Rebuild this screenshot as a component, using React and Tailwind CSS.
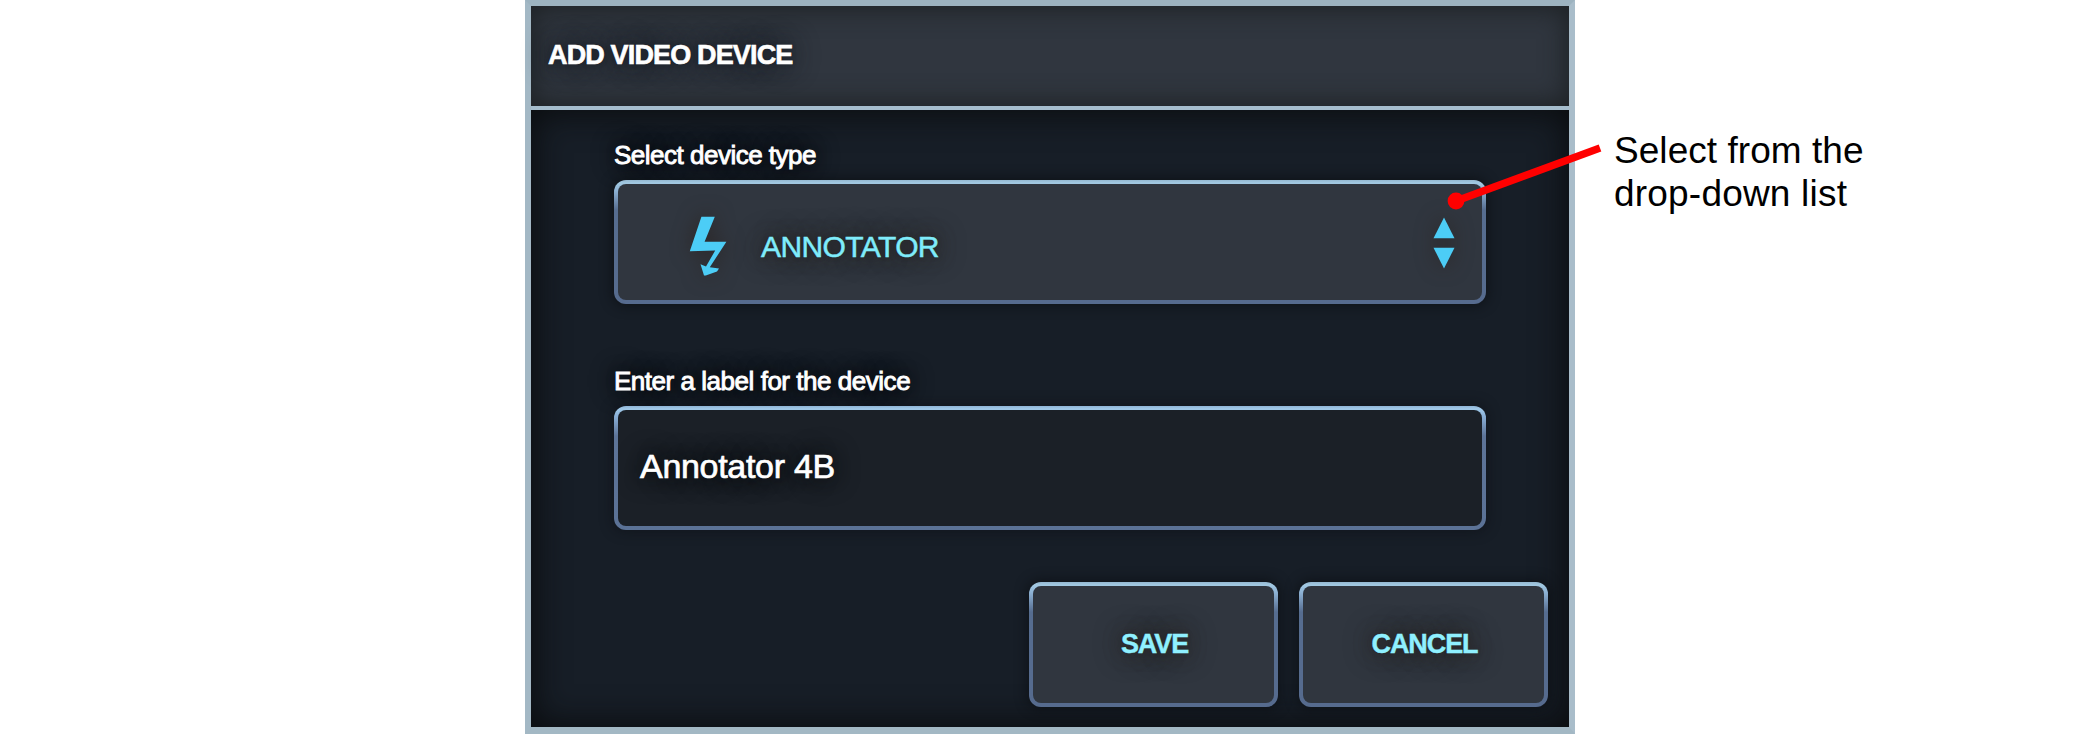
const FRAME =
  "rounded-[12px] border-[4px] border-transparent";
const RAISED =
  "[background:linear-gradient(#30363f,#30363f)_padding-box,linear-gradient(#94b8d0_0px,#a2c9e2_3px,#8fb4d6_10px,#566d90_30px,#566b8e_100%)_border-box] shadow-[0_0_12px_2px_rgba(12,14,19,0.7)]";
const SUNKEN =
  "[background:linear-gradient(#1b2027,#1b2027)_padding-box,linear-gradient(#8fb4d6_0px,#a0c9e8_3px,#8ab0d8_10px,#5d7498_30px,#5b7296_100%)_border-box] shadow-[0_0_12px_2px_rgba(12,14,19,0.5)]";

function BoltIcon() {
  return (
    <svg
      className="mt-[7px] h-[60px] w-[38px] shrink-0 drop-shadow-[0_0_10px_rgba(42,34,32,0.9)]"
      viewBox="0 0 38 60"
      fill="#4ccdf6"
    >
      <path d="M12.4 0.7H25.8L15.6 25.7H37.4L20.8 51.3L30 52.6L28 55.6L16.8 59.5H15L11.5 48.3L17 50.6L26.2 34.6L0.8 35.2Z" />
    </svg>
  );
}

function SortIcon() {
  return (
    <svg
      className="h-[52px] w-[22px] shrink-0 drop-shadow-[0_0_10px_rgba(42,34,32,0.9)]"
      viewBox="0 0 22 52"
      fill="#4ccdf6"
    >
      <path d="M11 0.5L21.5 21.3H0.5Z" />
      <path d="M0.5 30.7H21.5L11 51.5Z" />
    </svg>
  );
}

function ActionButton({ children }) {
  return (
    <button
      className={`${FRAME} ${RAISED} flex h-[125px] w-[249px] items-center justify-center pl-[2px] text-[27px] font-bold tracking-[-1.1px] text-[#8ff0ff] [-webkit-text-stroke:0.4px_#8ff0ff] [text-shadow:0_0_4px_#2c2a2b,0_0_18px_#2a2524,0_0_28px_#2a2524]`}
    >
      {children}
    </button>
  );
}

export default function App() {
  return (
    <div className="relative flex h-[734px] w-[2100px] overflow-hidden bg-white pl-[525px] font-['Liberation_Sans',Arial,sans-serif]">
      <section className="flex h-[734px] w-[1050px] shrink-0 flex-col border-[6px] border-b-[7px] border-t-[#9db3c0] border-r-[#a9bdca] border-b-[#a3b8c4] border-l-[#a3b8c5] bg-[#171e27]">
        <header className="flex h-[104px] shrink-0 items-center border-b-[4px] border-[#a5bdcd] bg-[#30363f] pb-[2px] pl-[17px] shadow-[inset_0_0_24px_4px_rgba(24,28,30,0.75)]">
          <h1 className="text-[27px] leading-none font-bold tracking-[-0.85px] text-white [-webkit-text-stroke:0.6px_white] [text-shadow:0_0_4px_#1d222a,0_0_20px_#1d222a,0_0_28px_#1d222a]">
            ADD VIDEO DEVICE
          </h1>
        </header>
        <div className="flex flex-1 flex-col shadow-[inset_0_0_32px_4px_rgba(8,9,10,0.85)]">
          <div className="flex flex-col pr-[83px] pl-[83px]">
            <label className="mt-[30px] h-[40px] text-[26px] leading-[30px] tracking-[-0.5px] text-white [-webkit-text-stroke:0.9px_white] [text-shadow:0_0_16px_#090b0e,0_0_24px_#090b0e]">
              Select device type
            </label>
            <div className={`${FRAME} ${RAISED} flex h-[124px] items-center pr-[27px] pl-[71px]`}>
              <BoltIcon />
              <span className="ml-[34px] pt-[9px] text-[30px] leading-none tracking-[-0.6px] text-[#7fecfb] [-webkit-text-stroke:0.5px_#7fecfb] [text-shadow:0_0_4px_#2a2524,0_0_18px_#2a2524,0_0_28px_#2a2524]">
                ANNOTATOR
              </span>
              <span className="mt-[2px] ml-auto">
                <SortIcon />
              </span>
            </div>
            <label className="mt-[62px] h-[40px] text-[26px] leading-[30px] tracking-[-0.47px] text-white [-webkit-text-stroke:0.9px_white] [text-shadow:0_0_16px_#090b0e,0_0_24px_#090b0e]">
              Enter a label for the device
            </label>
            <div className={`${FRAME} ${SUNKEN} flex h-[124px] items-center pb-[4px] pl-[22px] text-[34px] tracking-[-0.3px] text-white`}>
              <span className="leading-none [-webkit-text-stroke:0.7px_white] [text-shadow:0_0_16px_#0c0f11,0_0_26px_#0c0f11]">
                Annotator 4B
              </span>
            </div>
          </div>
          <div className="mt-[52px] flex justify-end gap-[21px] pr-[21px]">
            <ActionButton>SAVE</ActionButton>
            <ActionButton>CANCEL</ActionButton>
          </div>
        </div>
      </section>
      <p className="mt-[129px] ml-[39px] text-[37px] leading-[43px] tracking-[0.05px] text-black">
        Select from the
        <br />
        <span className="tracking-[0.2px]">drop-down list</span>
      </p>
      <svg className="pointer-events-none absolute top-[136px] left-[1440px] h-[80px] w-[164px]" viewBox="0 0 164 80">
        <path d="M16 65L160 12" stroke="#ff0000" strokeWidth="7.6" />
        <circle cx="16" cy="65" r="8.4" fill="#ff0000" />
      </svg>
    </div>
  );
}
